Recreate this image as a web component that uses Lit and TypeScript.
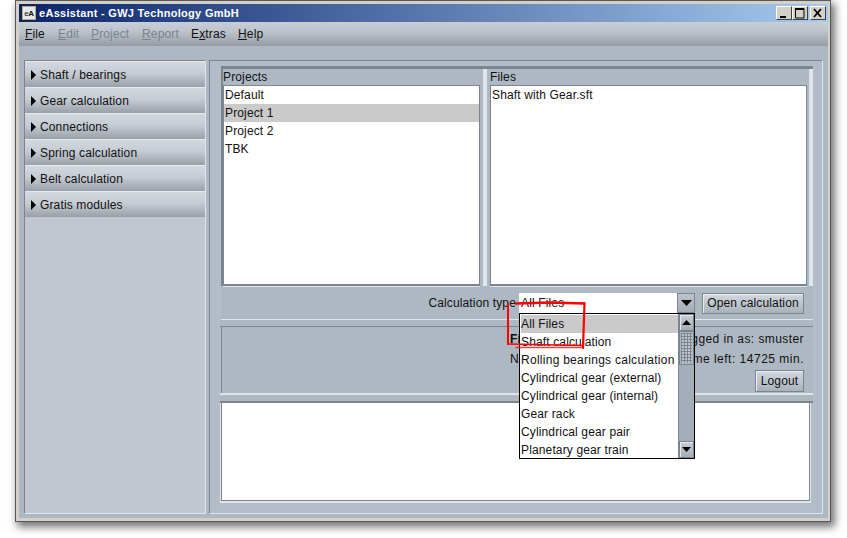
import { LitElement, html, css } from "lit";
import { customElement } from "lit/decorators.js";

@customElement("app-root")
export class AppRoot extends LitElement {
  static styles = css`
    :host { display: block; width: 847px; height: 538px; background: #fff; overflow: hidden; position: relative;
      font: 12px "Liberation Sans", Arial, sans-serif; color: #111; letter-spacing: .14px; }
    * { box-sizing: border-box; }
    .page { padding-left: 15px; }
    .win { width: 816px; height: 522px; border: 1px solid #55595c; box-shadow: 3px 4px 8px 1px rgba(0,0,0,.55);
      display: flex; flex-direction: column; background: #d4d0c8; padding: 3px 2px 3px 3px; }
    .title { height: 18px; flex: none; background: linear-gradient(90deg, #0a246a, #a6caf0); display: flex; align-items: center;
      padding: 0 2px; color: #fff; font: bold 11px "Liberation Sans", sans-serif; letter-spacing: .3px; }
    .ticon { width: 16px; height: 16px; background: #e8e8e8; border: 1px solid #222; outline: 1px solid #aaa; outline-offset: -2px;
      font: bold 8px "Liberation Sans", sans-serif; color: #111; display: flex; align-items: center; justify-content: center; margin-right: 2px; letter-spacing: -.3px; }
    .ticon em { font-style: normal; font-weight: normal; }
    .wbtns { margin-left: auto; display: flex; margin-right: 0; }
    .wb { width: 16px; height: 14px; background: #d4d0c8; border: 1px solid; border-color: #fff #404040 #404040 #fff; display: block; }
    .wb svg { display: block; }
    .wb.x { margin-left: 2px; }
    .menu { height: 24px; flex: none; background: linear-gradient(#c9ced6, #bcc3cb 40%, #959ca4); display: flex; align-items: center; padding-left: 6px; }
    .m0 { width: 33px; } .m1 { width: 33px; } .m2 { width: 51px; } .m3 { width: 49px; } .m4 { width: 47px; } .m5 { width: 40px; }
    .dis { color: #7b838b; }
    u { text-underline-offset: 1px; }
    .content { flex: 1; min-height: 0; background: #aeb8c2; display: flex; padding: 14px 5px 4px; gap: 3px; }
    .side { width: 182px; flex: none; background: #c0c7d0; border: 1px solid; border-color: #7c858e #dfe5ea #dfe5ea #7c858e; }
    .sb { height: 26px; background: linear-gradient(#d3d8df, #c6ccd4 45%, #98a0a8); border-top: 1px solid #e6eaee; display: flex; align-items: center; padding-left: 6px; gap: 4px; }
    .sb i { width: 0; height: 0; border-left: 5px solid #000; border-top: 5px solid transparent; border-bottom: 5px solid transparent; }
    .main { flex: 1; min-width: 0; border: 1px solid; border-color: #7c858e #dfe5ea #dfe5ea #7c858e; padding: 5px 9px 0 11px; background: #b3bdc7; display: flex; flex-direction: column; }
    .split { height: 220px; flex: none; display: flex; background: #aeb8c2; border-top: 3px solid #7c858e; border-left: 2px solid #7c858e; position: relative; }
    .pane { display: flex; flex-direction: column; padding-left: 0; }
    .pane.a { width: 260px; padding-right: 3px; }
    .pane.b { width: 322px; padding-left: 3px; padding-right: 2px; }
    .splitter { width: 4px; flex: none; background: #dfe5ea; }
    .ph { height: 16px; line-height: 17px; flex: none; }
    .list { flex: 1; background: #fff; border: 1px solid #7c858e; border-width: 1px 1px 2px 1px; box-shadow: 0 1px 0 #dfe5ea; }
    .row { height: 18px; line-height: 18px; padding-left: 1px; white-space: nowrap; }
    .row.sel { background: #cacaca; }
    .row.wide { letter-spacing: .27px; }
    .ctl { height: 34px; flex: none; background: #aeb8c2; display: flex; align-items: flex-start; justify-content: flex-end; padding: 7px 9px 0 0; border-bottom: 1px solid #dfe5ea; }
    .lbl { line-height: 20px; margin-right: 3px; }
    .combo { position: relative; width: 176px; height: 20px; background: #fff; display: flex; }
    .ctext { flex: 1; line-height: 20px; padding-left: 2px; }
    .arrow { width: 18px; background: linear-gradient(#bcc3cb, #a5adb6); border: 1px solid #7c858e; display: flex; align-items: center; justify-content: center; }
    .btn { background: linear-gradient(#d3d8df, #a9b1ba); border: 1px solid #7c858e; box-shadow: inset 1px 1px 0 #eef1f4; display: flex; align-items: center; justify-content: center; }
    .open { width: 102px; height: 21px; margin-left: 7px; padding-bottom: 1px; }
    .band { height: 7px; flex: none; border-bottom: 1px solid #7c858e; background: #aeb8c2; margin-left: -1px; }
    .login { height: 66px; flex: none; background: #aeb8c2; border-left: 1px solid #7c858e; display: flex; padding: 2px 9px 0 0; }
    .lleft { margin-left: 288px; display: flex; flex-direction: column; }
    .lleft b, .lleft span { line-height: 20px; height: 20px; }
    .lright { margin-left: auto; display: flex; flex-direction: column; align-items: flex-end; }
    .lright span { line-height: 20px; height: 20px; letter-spacing: .42px; }
    .lright span.tl { letter-spacing: .5px; }
    .lright span.logout { width: 49px; height: 22px; margin-top: 1px; letter-spacing: .14px; }
    .band2 { height: 10px; flex: none; border-top: 2px solid #dfe5ea; border-bottom: 2px solid #7c858e; background: #aeb8c2; margin-left: -1px; }
    .log { height: 98px; flex: none; width: 589px; background: #fff; border-left: 1px solid #7c858e; border-bottom: 1px solid #7c858e; border-right: 1px solid #7c858e; box-shadow: 0 1px 0 1px #dfe5ea; }
    .pop { position: absolute; left: 0; top: 20px; width: 176px; height: 146px; background: #fff; border: 1px solid #000; display: flex; padding: 1px 0 0 1px; z-index: 2; }
    .items { flex: 1; min-width: 0; }
    .items .row { padding-left: 0; }
    .sbar { width: 16px; background: #a4aeb8; display: flex; flex-direction: column; border-left: 1px solid #7c858e; margin-top: -1px; }
    .sbtn { height: 17px; flex: none; background: linear-gradient(#c9ced6, #a5adb6); border: 1px solid #7c858e; box-shadow: inset 1px 1px 0 #e6eaee; display: flex; align-items: center; justify-content: center; }
    .thumb { height: 34px; flex: none; background-color: #bcc3cb; background-image: radial-gradient(#6f7881 45%, transparent 55%); background-size: 3px 3px; border: 1px solid #7c858e; box-shadow: inset 0 0 0 1px #aeb6bf; }
    .track { flex: 1; }
    .scribble { position: absolute; left: 500px; top: 295px; z-index: 5; pointer-events: none; }
  `;

  render() {
    const projects = ["Default", "Project 1", "Project 2", "TBK"];
    const items = ["All Files", "Shaft calculation", "Rolling bearings calculation", "Cylindrical gear (external)", "Cylindrical gear (internal)", "Gear rack", "Cylindrical gear pair", "Planetary gear train"];
    const mods = ["Shaft / bearings", "Gear calculation", "Connections", "Spring calculation", "Belt calculation", "Gratis modules"];
    return html`
      <div class="page"><div class="win">
        <div class="title">
          <span class="ticon"><em>e</em>A</span><span>eAssistant - GWJ Technology GmbH</span>
          <div class="wbtns">
            <span class="wb"><svg width="14" height="12"><rect x="3" y="9" width="6" height="2" fill="#000"/></svg></span>
            <span class="wb"><svg width="14" height="12"><path d="M2.5 1.5v9.5h8.5V1.5" fill="none" stroke="#000"/><rect x="2" y="1" width="9" height="2" fill="#000"/></svg></span>
            <span class="wb x"><svg width="14" height="12"><path d="M3 2l7 8M10 2l-7 8" stroke="#000" stroke-width="1.8" fill="none"/></svg></span>
          </div>
        </div>
        <div class="menu">
          <span class="m0"><u>F</u>ile</span><span class="m1 dis"><u>E</u>dit</span><span class="m2 dis"><u>P</u>roject</span>
          <span class="m3 dis"><u>R</u>eport</span><span class="m4">E<u>x</u>tras</span><span class="m5"><u>H</u>elp</span>
        </div>
        <div class="content">
          <div class="side">
            ${mods.map((m) => html`<div class="sb"><i></i><span>${m}</span></div>`)}
          </div>
          <div class="main">
            <div class="split">
              <div class="pane a">
                <div class="ph">Projects</div>
                <div class="list">${projects.map((p) => html`<div class="row ${p === "Project 1" ? "sel" : ""}">${p}</div>`)}</div>
              </div>
              <div class="splitter"></div>
              <div class="pane b">
                <div class="ph">Files</div>
                <div class="list"><div class="row">Shaft with Gear.sft</div></div>
              </div>
              <div class="splitter"></div>
            </div>
            <div class="ctl">
              <span class="lbl">Calculation type</span>
              <div class="combo">
                <span class="ctext">All Files</span>
                <span class="arrow"><svg width="11" height="6"><path d="M0 0h11L5.5 6z" fill="#000"/></svg></span>
                <div class="pop">
                  <div class="items">${items.map((t, i) => html`<div class="row ${i === 0 ? "sel" : ""} ${i === 2 ? "wide" : ""}">${t}</div>`)}</div>
                  <div class="sbar">
                    <div class="sbtn"><svg width="9" height="5"><path d="M4.5 0l4.5 5H0z" fill="#000"/></svg></div>
                    <div class="thumb"></div>
                    <div class="track"></div>
                    <div class="sbtn"><svg width="9" height="5"><path d="M0 0h9L4.5 5z" fill="#000"/></svg></div>
                  </div>
                </div>
              </div>
              <span class="btn open">Open calculation</span>
            </div>
            <div class="band"></div>
            <div class="login">
              <div class="lleft"><b>Fi</b><span>N</span></div>
              <div class="lright">
                <span>Logged in as: smuster</span>
                <span class="tl">Time left: 14725 min.</span>
                <span class="btn logout">Logout</span>
              </div>
            </div>
            <div class="band2"></div>
            <div class="log"></div>
          </div>
        </div>
      </div></div>
      <svg class="scribble" width="90" height="60" viewBox="500 295 90 60" fill="none" stroke="#f00" stroke-linecap="round">
        <path d="M516 303.5L550 302.5L584 303.5" stroke-width="2.4"/>
        <path d="M508 304V344" stroke-width="2"/>
        <path d="M508 344L583 345.5" stroke-width="1.6"/>
        <path d="M516 347.5H583" stroke-width="1.4" opacity=".75"/>
        <path d="M584.5 303L583 348" stroke-width="2.2"/>
      </svg>`;
  }
}
